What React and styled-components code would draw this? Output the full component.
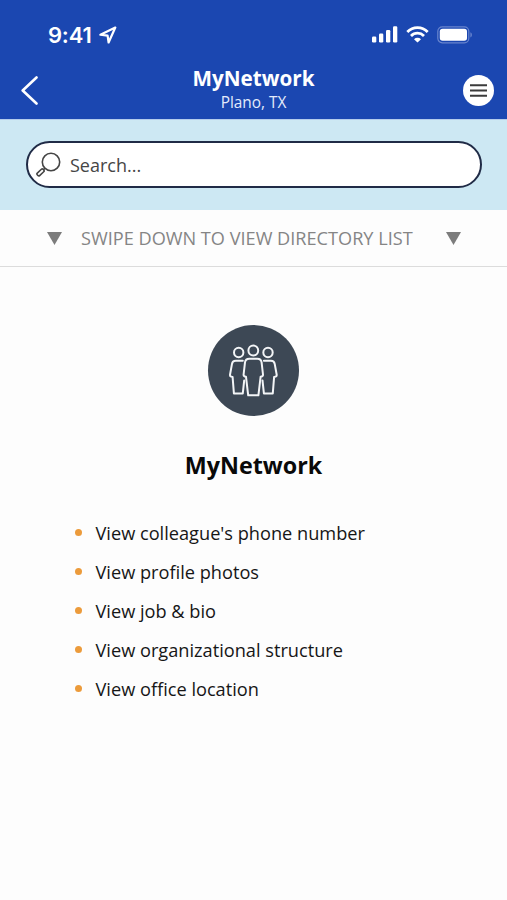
import React from "react";
import styled, { createGlobalStyle } from "styled-components";

const GlobalStyle = createGlobalStyle`
  * { box-sizing: border-box; }
  body { margin: 0; background: #fdfdfd; }
`;

const Screen = styled.div`
  width: 507px;
  height: 900px;
  overflow: hidden;
  display: flex;
  flex-direction: column;
  background: #fdfdfd;
  font-family: "Open Sans", "Noto Sans", sans-serif;
  color: #161616;
`;

const Header = styled.header`
  flex: none;
  height: 119px;
  background: #1b47b1;
  color: #fff;
`;

const StatusBar = styled.div`
  height: 62px;
  padding: 7px 34px 0 48px;
  display: flex;
  align-items: center;
  justify-content: space-between;
`;

const Clock = styled.div`
  display: flex;
  align-items: center;
  gap: 5px;
  font: 600 22px/28px Inter, sans-serif;
`;

const Time = styled.span`
  width: 46px;
  letter-spacing: -0.2px;
  white-space: nowrap;
`;

const StatusIcons = styled.div`
  display: flex;
  align-items: center;
  gap: 8px;
`;

const NavBar = styled.div`
  height: 57px;
  padding: 0 13px 0 21px;
  display: grid;
  grid-template-columns: 32px 1fr 31px;
  align-items: center;
`;

const IconButton = styled.button`
  display: flex;
  padding: 0;
  border: 0;
  background: none;
  color: inherit;
`;

const MenuButton = styled(IconButton)`
  width: 31px;
  height: 31px;
  margin-bottom: 1px;
  border-radius: 50%;
  background: #fff;
  color: #3b3b3b;
  align-items: center;
  justify-content: center;
`;

const Titles = styled.div`
  text-align: center;
  margin-right: 9px;
  padding-bottom: 4px;
`;

const Title = styled.h1`
  margin: 0;
  font-size: 20.7px;
  line-height: 27px;
  font-weight: 700;
`;

const Subtitle = styled.div`
  font-size: 15.4px;
  line-height: 21px;
  color: #e4ebfb;
`;

const SearchArea = styled.div`
  flex: none;
  height: 91px;
  padding: 21px 25px 0 26px;
  background: #cde8f3;
  border-top: 1px solid #b4ccec;
`;

const SearchBox = styled.label`
  height: 47px;
  padding-left: 8px;
  display: flex;
  align-items: center;
  gap: 9px;
  border: 2px solid #202b46;
  border-radius: 24px;
  background: #fff;
`;

const SearchText = styled.span`
  font-size: 18px;
  line-height: 24px;
  color: #454545;
`;

const SwipeHint = styled.div`
  flex: none;
  height: 57px;
  padding: 0 46px 0 47px;
  display: flex;
  align-items: center;
  border-bottom: 1px solid #dcdcdc;
  color: #858585;
`;

const HintText = styled.span`
  margin: 0 auto 0 19px;
  font-size: 18.15px;
  line-height: 24px;
  white-space: nowrap;
`;

const Main = styled.main`
  padding-top: 58px;
  display: flex;
  flex-direction: column;
  align-items: center;
`;

const Badge = styled.div`
  width: 91px;
  height: 91px;
  border-radius: 50%;
  background: #3d4855;
  color: #f3f5f7;
`;

const Heading = styled.h2`
  margin: 32px 0 0;
  font-size: 23.3px;
  line-height: 34px;
  font-weight: 700;
  color: #090909;
`;

const Features = styled.ul`
  align-self: stretch;
  list-style: none;
  margin: 31px 0 0;
  padding: 0 0 0 75px;
`;

const Feature = styled.li`
  height: 39px;
  display: flex;
  align-items: center;
  gap: 13.5px;
  font-size: 18.2px;
  line-height: 24px;
  white-space: nowrap;

  &::before {
    content: "";
    width: 7px;
    height: 7px;
    margin-top: -1px;
    border-radius: 50%;
    background: #ec9b3b;
  }
`;

const LocationArrow = () => (
  <svg width="18" height="18" viewBox="0 0 18 18" fill="none" stroke="currentColor" strokeWidth="2.2" strokeLinejoin="round">
    <path d="M16.3 1.5 1.4 8.7l7.2.9 1 6.9Z" />
  </svg>
);

const Signal = () => (
  <svg width="26" height="17" viewBox="0 0 26 17" fill="currentColor">
    <rect x="0" y="10.5" width="4.3" height="6" rx="1.2" />
    <rect x="7" y="7.5" width="4.3" height="9" rx="1.2" />
    <rect x="14" y="4" width="4.3" height="12.5" rx="1.2" />
    <rect x="21" y="0.3" width="4.3" height="16.2" rx="1.2" />
  </svg>
);

const Wifi = () => (
  <svg width="23" height="17" viewBox="0 0 23 17" fill="none" stroke="currentColor" strokeWidth="2.8">
    <path d="M1.3 6a14.3 14.3 0 0 1 20.4 0" />
    <path d="M5 9.9a9.2 9.2 0 0 1 13 0" />
    <path d="M8 13.2a5 5 0 0 1 7 0L11.5 16.6Z" fill="currentColor" stroke="none" />
  </svg>
);

const Battery = () => (
  <svg width="36" height="18" viewBox="0 0 36 18">
    <rect x="0.8" y="0.8" width="31" height="16" rx="4.5" fill="none" stroke="#6884cd" strokeWidth="1.2" />
    <rect x="2.8" y="2.8" width="27.2" height="12" rx="2.8" fill="currentColor" />
    <path d="M33.4 6.3c2 .8 2 4.4 0 5.2Z" fill="#6884cd" />
  </svg>
);

const Back = () => (
  <svg width="18" height="30" viewBox="0 0 18 30" fill="none" stroke="currentColor" strokeWidth="2.6" strokeLinecap="round" strokeLinejoin="round">
    <path d="M15.5 1.5 1.7 14.5l13.8 13" />
  </svg>
);

const MenuLines = () => (
  <svg width="17" height="13" viewBox="0 0 17 13" stroke="currentColor" strokeWidth="1.9">
    <path d="M0 1.3h17M0 6.5h17M0 11.7h17" />
  </svg>
);

const Magnifier = () => (
  <svg width="25" height="25" viewBox="0 0 25 25" fill="none" stroke="#454545" strokeWidth="1.6">
    <circle cx="15" cy="10" r="8.7" />
    <path d="M9 16.1 7.2 18" />
    <rect x="-4" y="-1.7" width="8" height="3.4" rx="1.2" transform="translate(4.5 20.4) rotate(-43)" />
  </svg>
);

const Triangle = () => (
  <svg width="15" height="13" viewBox="0 0 15 13">
    <path d="M0 0h15L7.5 13Z" fill="#7c7c7c" />
  </svg>
);

const People = () => (
  <svg width="91" height="91" viewBox="0 0 91 91" fill="none" stroke="currentColor" strokeWidth="2" strokeLinejoin="round" strokeLinecap="round">
    <circle cx="45.3" cy="25.5" r="4.9" />
    <circle cx="30.7" cy="27.5" r="4.7" />
    <circle cx="60" cy="27.5" r="4.7" />
    <path d="M41.2 33.7h8.2q3.6 0 4.2 3.6l1.4 12.2q.2 2-2.4 2.3l-2.2 18.5h-10.2l-2.2-18.5q-2.6-.3-2.4-2.3l1.4-12.2q.6-3.6 4.2-3.6Z" />
    <path d="M34.8 35.7h-7.1q-3.2 0-3.7 3.1l-2 11q-.2 1.7 2.6 2.2l1.3 16.4h8.9l1.4-13" />
    <path d="M55.9 35.7h7.1q3.2 0 3.7 3.1l2 11q.2 1.7-2.6 2.2l-1.3 16.4h-8.9l-1.4-13" />
  </svg>
);

const features = [
  "View colleague's phone number",
  "View profile photos",
  "View job & bio",
  "View organizational structure",
  "View office location",
];

export default function App() {
  return (
    <Screen>
      <GlobalStyle />
      <Header>
        <StatusBar>
          <Clock>
            <Time>9:41</Time>
            <LocationArrow />
          </Clock>
          <StatusIcons>
            <Signal />
            <Wifi />
            <Battery />
          </StatusIcons>
        </StatusBar>
        <NavBar>
          <IconButton aria-label="Back"><Back /></IconButton>
          <Titles>
            <Title>MyNetwork</Title>
            <Subtitle>Plano, TX</Subtitle>
          </Titles>
          <MenuButton aria-label="Menu"><MenuLines /></MenuButton>
        </NavBar>
      </Header>
      <SearchArea>
        <SearchBox>
          <Magnifier />
          <SearchText>Search...</SearchText>
        </SearchBox>
      </SearchArea>
      <SwipeHint>
        <Triangle />
        <HintText>SWIPE DOWN TO VIEW DIRECTORY LIST</HintText>
        <Triangle />
      </SwipeHint>
      <Main>
        <Badge><People /></Badge>
        <Heading>MyNetwork</Heading>
        <Features>
          {features.map((text) => (
            <Feature key={text}>{text}</Feature>
          ))}
        </Features>
      </Main>
    </Screen>
  );
}
